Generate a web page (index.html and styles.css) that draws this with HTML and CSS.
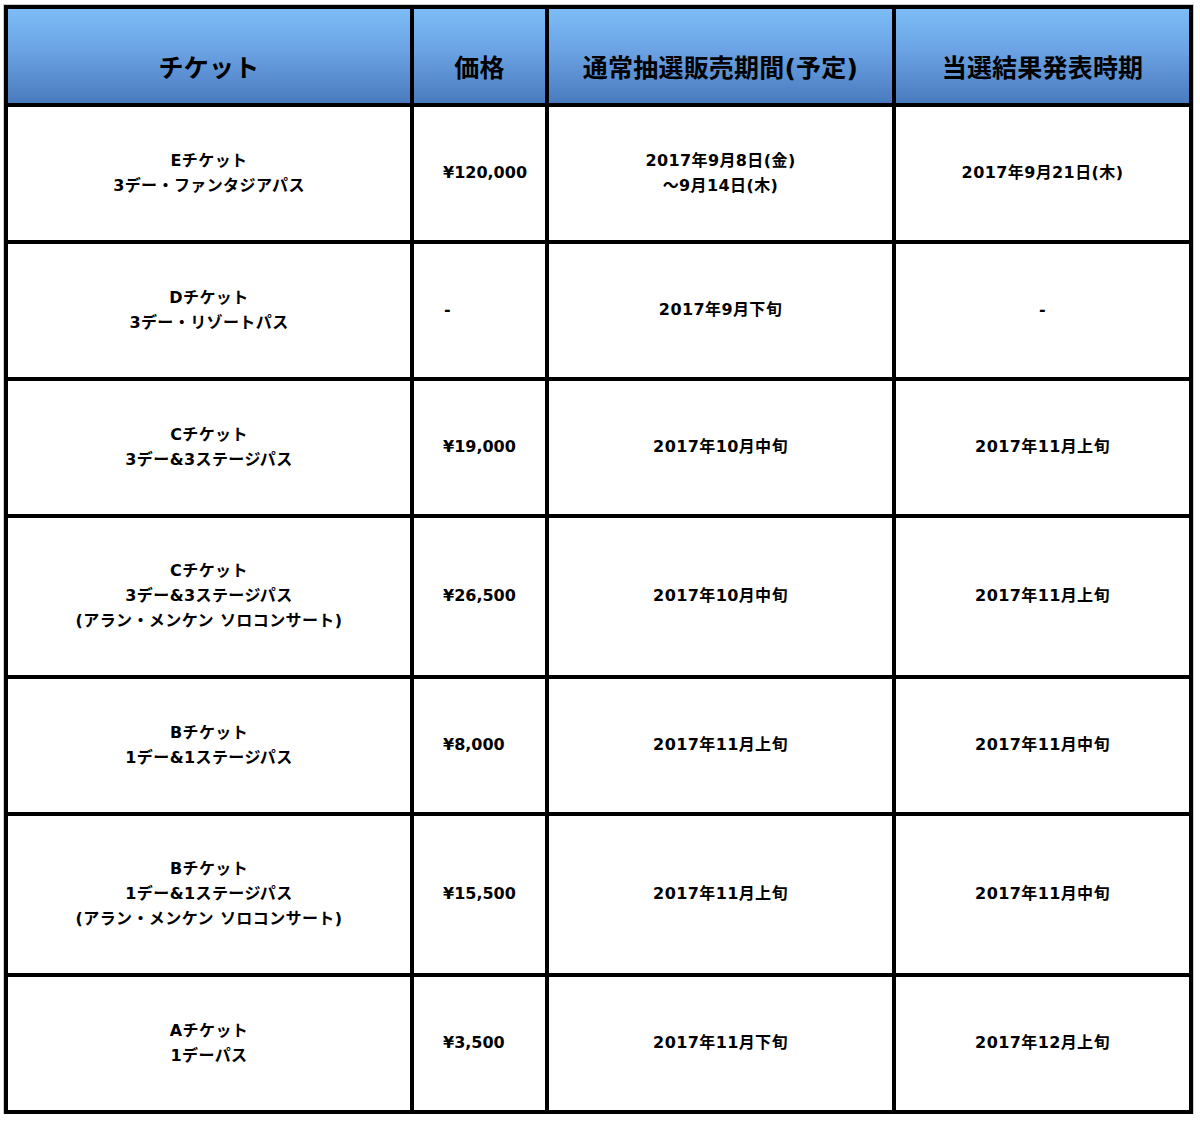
FILE: index.html
```html
<!DOCTYPE html>
<html lang="ja">
<head>
<meta charset="utf-8">
<title>チケット</title>
<link rel="stylesheet" href="styles.css">
</head>
<body>
<div class="ticket-table" role="table">
  <div class="cell head" role="columnheader">チケット</div>
  <div class="cell head" role="columnheader">価格</div>
  <div class="cell head" role="columnheader">通常抽選販売期間(予定)</div>
  <div class="cell head" role="columnheader">当選結果発表時期</div>

  <div class="cell">Eチケット<br>3デー・ファンタジアパス</div>
  <div class="cell price">¥120,000</div>
  <div class="cell">2017年9月8日(金)<br>～9月14日(木)</div>
  <div class="cell">2017年9月21日(木)</div>

  <div class="cell">Dチケット<br>3デー・リゾートパス</div>
  <div class="cell price dash">-</div>
  <div class="cell">2017年9月下旬</div>
  <div class="cell">-</div>

  <div class="cell">Cチケット<br>3デー&amp;3ステージパス</div>
  <div class="cell price">¥19,000</div>
  <div class="cell">2017年10月中旬</div>
  <div class="cell">2017年11月上旬</div>

  <div class="cell">Cチケット<br>3デー&amp;3ステージパス<br>(アラン・メンケン ソロコンサート)</div>
  <div class="cell price">¥26,500</div>
  <div class="cell">2017年10月中旬</div>
  <div class="cell">2017年11月上旬</div>

  <div class="cell">Bチケット<br>1デー&amp;1ステージパス</div>
  <div class="cell price">¥8,000</div>
  <div class="cell">2017年11月上旬</div>
  <div class="cell">2017年11月中旬</div>

  <div class="cell">Bチケット<br>1デー&amp;1ステージパス<br>(アラン・メンケン ソロコンサート)</div>
  <div class="cell price">¥15,500</div>
  <div class="cell">2017年11月上旬</div>
  <div class="cell">2017年11月中旬</div>

  <div class="cell">Aチケット<br>1デーパス</div>
  <div class="cell price">¥3,500</div>
  <div class="cell">2017年11月下旬</div>
  <div class="cell">2017年12月上旬</div>
</div>
</body>
</html>
```

FILE: styles.css
```css
html, body {
  margin: 0;
  padding: 0;
  background: #fff;
}

body {
  padding: 5px 0 0 4px;
  font-family: "DejaVu Sans", "Noto Sans CJK JP", sans-serif;
  font-weight: bold;
  color: #000;
}

.ticket-table {
  display: grid;
  grid-template-columns: 402px 131px 343px 293px;
  grid-template-rows: 94px 133px 133px 133px 157px 133px 157px 133px;
  gap: 4px;
  padding: 4px;
  width: max-content;
  background: #000;
  box-shadow: 0 0 0 1px rgba(0, 0, 0, 0.2);
}

.cell {
  display: flex;
  flex-direction: column;
  align-items: center;
  justify-content: center;
  text-align: center;
  background: #fff;
  font-size: 16px;
  line-height: 25px;
  letter-spacing: 0.4px;
  padding-bottom: 2px;
}

.cell.head {
  justify-content: flex-end;
  background: linear-gradient(to bottom, #7dbcf7 0%, #6aa2e3 45%, #4a7bbf 100%);
  font-size: 25px;
  line-height: 30px;
  letter-spacing: 0.2px;
  padding-bottom: 19px;
}

.cell.price {
  align-items: flex-start;
  text-align: left;
  letter-spacing: 0;
  padding-left: 29px;
}

.cell.price.dash {
  padding-left: 30px;
}
```
